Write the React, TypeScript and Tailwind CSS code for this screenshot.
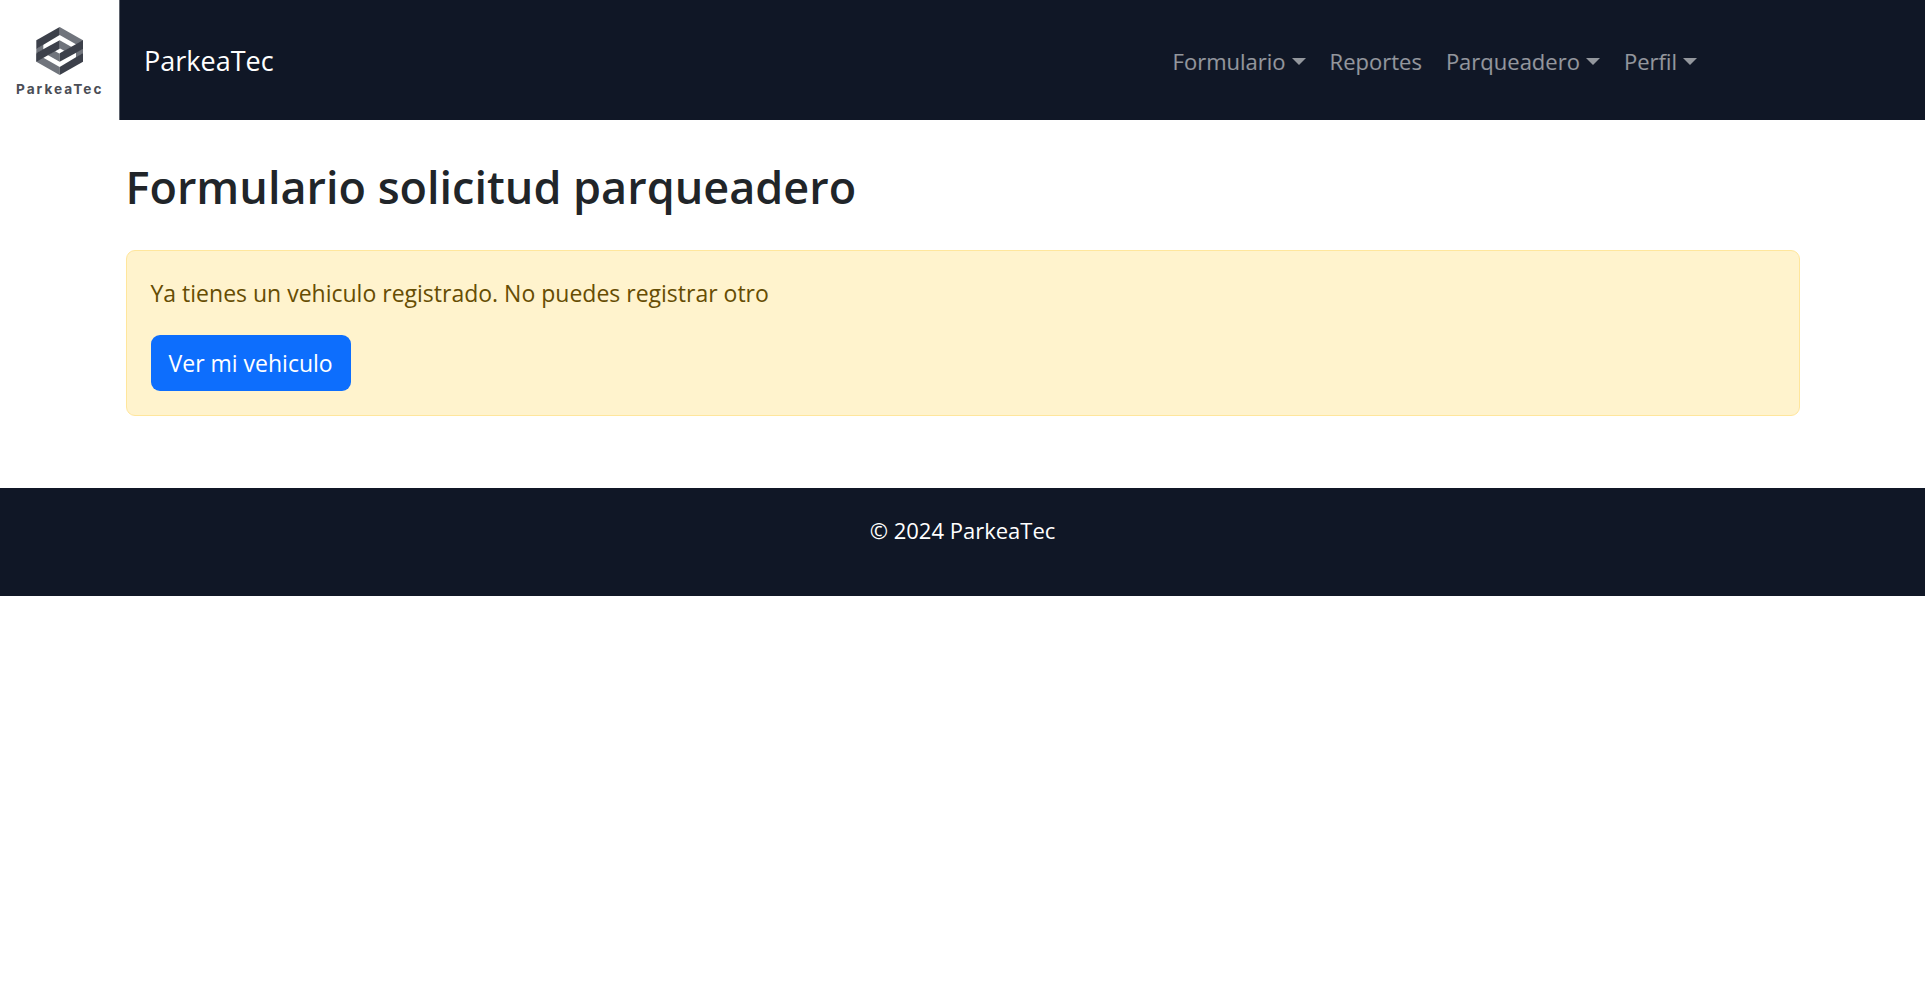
const link = "text-white/55 hover:text-white/75";

function Logo() {
  return (
    <svg viewBox="0 0 360 360" className="block size-30" role="img" aria-label="ParkeaTec">
      <rect width="358" height="360" fill="#fff" />
      <g fill="#70747c">
        <path d="M179 81 249 121 249 145 179 105Z" />
        <path d="M179 225 109 185 109 161 179 201Z" />
        <path d="M179 121 215 141 194 153 179 145Z" />
        <path d="M179 185 143 165 164 153 179 161Z" />
        <path d="M109 146 130 133 130 149 109 160Z" />
        <path d="M249 160 228 173 228 157 249 146Z" />
      </g>
      <g fill="#3c404a">
        <path d="M109 121 179 81 179 105 109 147Z" />
        <path d="M249 185 179 225 179 201 249 159Z" />
        <path d="M249 121 249 147 179 185 179 160Z" />
        <path d="M109 185 109 159 179 121 179 146Z" />
      </g>
      <text x="48" y="282" fontSize="41" fontWeight="700" letterSpacing="6" fill="#4b4e56" fontFamily="Inter, sans-serif">ParkeaTec</text>
    </svg>
  );
}

function Caret() {
  return (
    <svg viewBox="0 0 14 7" className="h-[7px] w-[14px] fill-current" aria-hidden="true">
      <path d="M0 0h14L7 7Z" />
    </svg>
  );
}

function Menu({ label }: { label: string }) {
  return (
    <button type="button" aria-haspopup="menu" className={`flex items-center gap-[6px] ${link}`}>
      {label}
      <Caret />
    </button>
  );
}

export default function App() {
  return (
    <div className="bg-white font-['Open_Sans',sans-serif] text-[23px] leading-9 text-[#212529]">
      <header className="flex items-center bg-[#101726] pr-[228px]">
        <Logo />
        <a href="#" className="ml-6 pt-[2px] text-[27px] leading-10 text-white">ParkeaTec</a>
        <nav className="ml-auto flex items-center gap-6 pt-[2px] text-[22px]">
          <Menu label="Formulario" />
          <a href="#" className={link}>Reportes</a>
          <Menu label="Parqueadero" />
          <Menu label="Perfil" />
        </nav>
      </header>
      <main className="mx-auto w-full max-w-[1710px] px-[18px] pt-9 pb-[72px]">
        <h1 className="mb-8 text-[45px] leading-[62px] font-semibold">Formulario solicitud parqueadero</h1>
        <section className="rounded-[9px] border border-[#ffe69c] bg-[#fff3cd] p-6 text-[#664d03]">
          <p className="mb-6">Ya tienes un vehiculo registrado. No puedes registrar otro</p>
          <button type="button" className="rounded-[9px] bg-[#0d6efd] px-[18px] py-[10px] text-white">Ver mi vehiculo</button>
        </section>
      </main>
      <footer className="bg-[#101726] px-6 pt-6 pb-12 text-center text-[22px] text-white">
        <p>© 2024 ParkeaTec</p>
      </footer>
    </div>
  );
}
